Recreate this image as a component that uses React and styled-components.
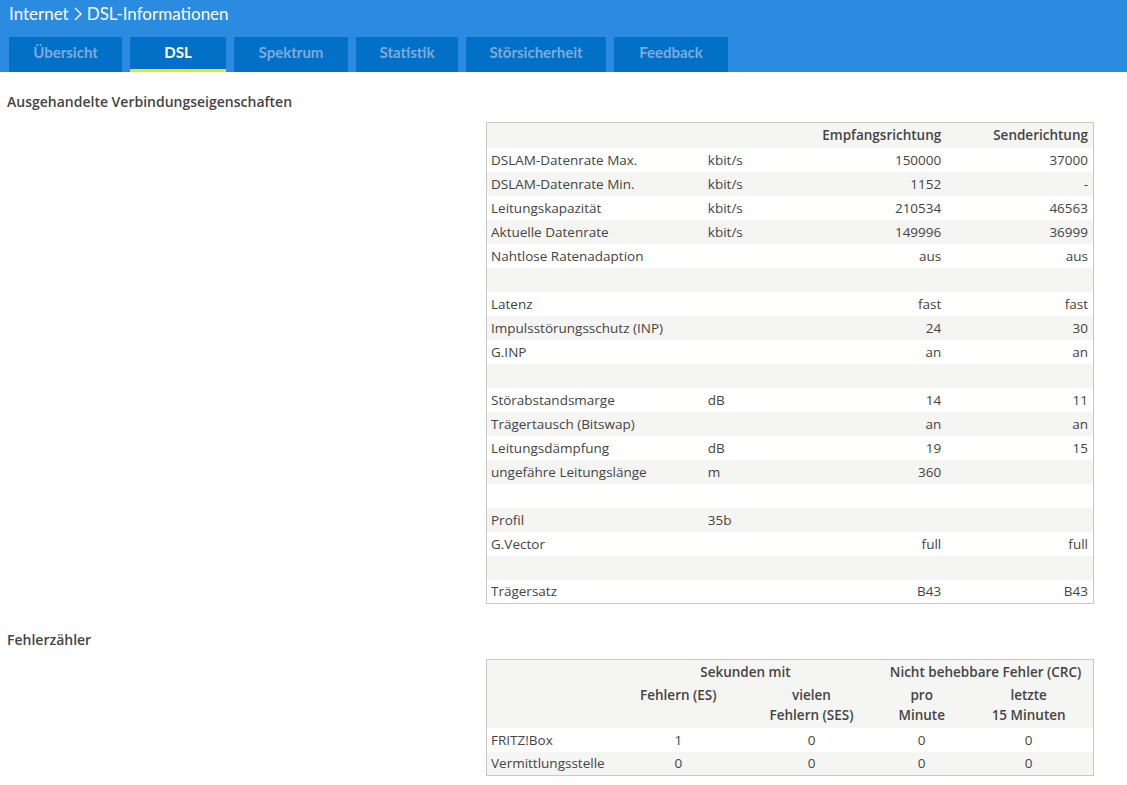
import React from "react";
import styled, { createGlobalStyle } from "styled-components";

const Global = createGlobalStyle`
  html, body { margin: 0; padding: 0; background: #fff; }
  body { font-family: "Open Sans", "Liberation Sans", sans-serif; color: #444; }
  * { box-sizing: border-box; }
`;

const Header = styled.header`
  background: #2a8be0;
  height: 72px;
  display: flex;
  flex-direction: column;
  justify-content: space-between;
  font-family: Lato, "Liberation Sans", sans-serif;
`;

const Crumbs = styled.div`
  display: flex;
  align-items: center;
  gap: 3px;
  padding: 3px 0 0 9px;
  color: #fff;
  font-size: 17px;
  line-height: 22px;
`;

const Tabs = styled.nav`
  display: flex;
  gap: 8px;
  padding-left: 9px;
`;

const Tab = styled.div`
  width: ${(p) => p.$w}px;
  height: 35px;
  background: #0170c6;
  color: ${(p) => (p.$active ? "#fff" : "#7cabdd")};
  font-size: 15px;
  font-weight: 700;
  display: flex;
  align-items: center;
  justify-content: center;
  padding-bottom: 3px;
  border-bottom: 3px solid ${(p) => (p.$active ? "#f5e400" : "transparent")};
`;

const Main = styled.main`
  padding: 0 0 10px 7px;
`;

const SectionTitle = styled.h2`
  margin: 0;
  font-size: 14px;
  font-weight: 600;
  color: #444;
  line-height: 20px;
  padding-top: ${(p) => p.$top}px;
`;

const Table = styled.table`
  margin-left: 479px;
  margin-top: ${(p) => p.$top}px;
  width: 608px;
  border-collapse: collapse;
  border: 1px solid #c8c8c6;
  table-layout: fixed;
  font-size: 13.5px;
  color: #444;
`;

const Row = styled.tr`
  background: ${(p) => (p.$gray ? "#f5f5f3" : "#fff")};
`;

const Cell = styled.td`
  height: ${(p) => p.$h || 24}px;
  padding: 0 5px 0 4px;
  text-align: ${(p) => p.$align || "left"};
  font-weight: ${(p) => (p.$bold ? 600 : 400)};
  line-height: 20px;
  vertical-align: ${(p) => p.$valign || "middle"};
  white-space: nowrap;
`;

const Chevron = () => (
  <svg width="12" height="18" viewBox="0 0 12 18" fill="none">
    <path d="M3 3 L9 9 L3 15" stroke="#fff" strokeWidth="1.4" />
  </svg>
);

const tabs = [
  ["Übersicht", 113],
  ["DSL", 96, true],
  ["Spektrum", 114],
  ["Statistik", 102],
  ["Störsicherheit", 140],
  ["Feedback", 114],
];

const rows = [
  ["DSLAM-Datenrate Max.", "kbit/s", "150000", "37000"],
  ["DSLAM-Datenrate Min.", "kbit/s", "1152", "-"],
  ["Leitungskapazität", "kbit/s", "210534", "46563"],
  ["Aktuelle Datenrate", "kbit/s", "149996", "36999"],
  ["Nahtlose Ratenadaption", "", "aus", "aus"],
  ["", "", "", ""],
  ["Latenz", "", "fast", "fast"],
  ["Impulsstörungsschutz (INP)", "", "24", "30"],
  ["G.INP", "", "an", "an"],
  ["", "", "", ""],
  ["Störabstandsmarge", "dB", "14", "11"],
  ["Trägertausch (Bitswap)", "", "an", "an"],
  ["Leitungsdämpfung", "dB", "19", "15"],
  ["ungefähre Leitungslänge", "m", "360", ""],
  ["", "", "", ""],
  ["Profil", "35b", "", ""],
  ["G.Vector", "", "full", "full"],
  ["", "", "", ""],
  ["Trägersatz", "", "B43", "B43"],
];

const errRows = [
  ["FRITZ!Box", "1", "0", "0", "0"],
  ["Vermittlungsstelle", "0", "0", "0", "0"],
];

export default function App() {
  return (
    <>
      <Global />
      <Header>
        <Crumbs>
          <span>Internet</span>
          <Chevron />
          <span>DSL-Informationen</span>
        </Crumbs>
        <Tabs>
          {tabs.map(([t, w, a]) => (
            <Tab key={t} $w={w} $active={a}>
              {t}
            </Tab>
          ))}
        </Tabs>
      </Header>
      <Main>
        <SectionTitle $top={20}>Ausgehandelte Verbindungseigenschaften</SectionTitle>
        <Table $top={10}>
          <colgroup>
            <col style={{ width: 217 }} />
            <col style={{ width: 90 }} />
            <col style={{ width: 152 }} />
            <col style={{ width: 147 }} />
          </colgroup>
          <tbody>
            <Row $gray>
              <Cell $h={25} />
              <Cell $h={25} />
              <Cell $h={25} $align="right" $bold>Empfangsrichtung</Cell>
              <Cell $h={25} $align="right" $bold>Senderichtung</Cell>
            </Row>
            {rows.map((r, i) => (
              <Row key={i} $gray={i % 2 === 1}>
                <Cell>{r[0]}</Cell>
                <Cell>{r[1]}</Cell>
                <Cell $align="right">{r[2]}</Cell>
                <Cell $align="right">{r[3]}</Cell>
              </Row>
            ))}
          </tbody>
        </Table>
        <SectionTitle $top={26}>Fehlerzähler</SectionTitle>
        <Table $top={9}>
          <colgroup>
            <col style={{ width: 126 }} />
            <col style={{ width: 132 }} />
            <col style={{ width: 134 }} />
            <col style={{ width: 86 }} />
            <col style={{ width: 128 }} />
          </colgroup>
          <tbody>
            <Row $gray>
              <Cell $h={25} />
              <Cell $h={25} colSpan={2} $align="center" $bold>Sekunden mit</Cell>
              <Cell $h={25} colSpan={2} $align="center" $bold>Nicht behebbare Fehler (CRC)</Cell>
            </Row>
            <Row $gray>
              <Cell $h={43} />
              <Cell $h={43} $align="center" $bold $valign="top">Fehlern (ES)</Cell>
              <Cell $h={43} $align="center" $bold $valign="top">vielen<br />Fehlern (SES)</Cell>
              <Cell $h={43} $align="center" $bold $valign="top">pro<br />Minute</Cell>
              <Cell $h={43} $align="center" $bold $valign="top">letzte<br />15 Minuten</Cell>
            </Row>
            {errRows.map((r, i) => (
              <Row key={i} $gray={i === 1}>
                <Cell>{r[0]}</Cell>
                {r.slice(1).map((v, j) => (
                  <Cell key={j} $align="center">{v}</Cell>
                ))}
              </Row>
            ))}
          </tbody>
        </Table>
      </Main>
    </>
  );
}
